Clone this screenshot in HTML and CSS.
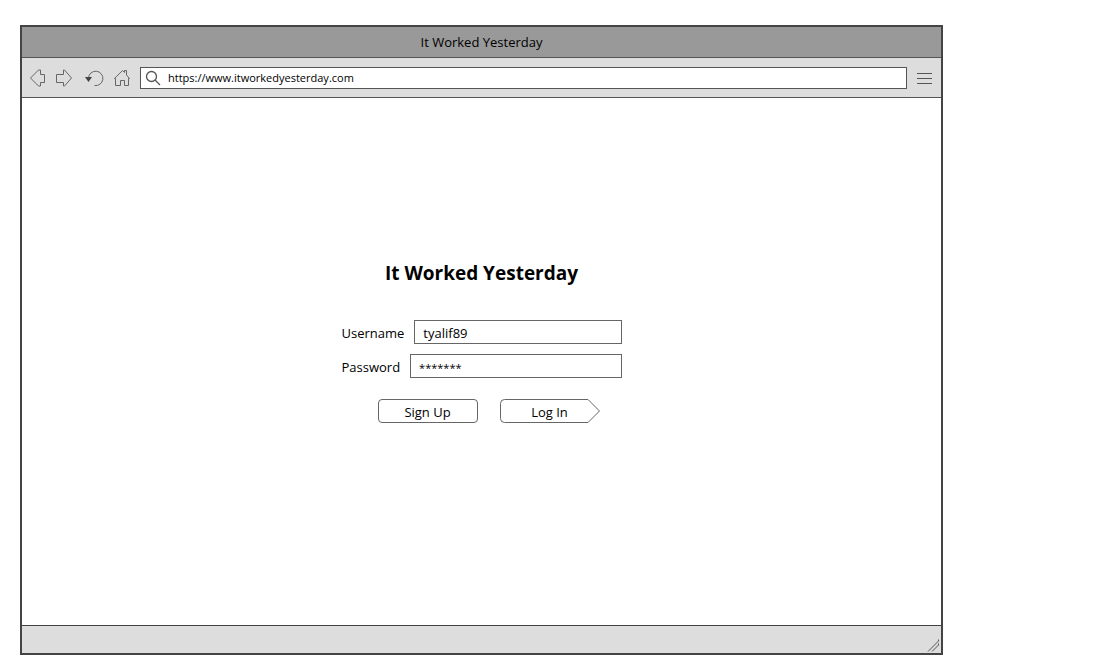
FILE: index.html
```html
<!DOCTYPE html>
<html lang="en">
<head>
<meta charset="utf-8">
<title>It Worked Yesterday</title>
<link rel="stylesheet" href="styles.css">
</head>
<body>
<div class="window">
  <header class="titlebar">It Worked Yesterday</header>
  <nav class="toolbar">
    <button class="tool" type="button" aria-label="Back">
      <svg width="16" height="18" viewBox="0 0 16 18"><path d="M.5 9 8.500 1H10.500V5.500H14.500V13.500H10.500V17H8.500Z"/></svg>
    </button>
    <button class="tool" type="button" aria-label="Forward">
      <svg width="16" height="18" viewBox="0 0 16 18"><path d="M15.500 9 8.500 1H7.500V5.500H.5V13.500H7.500V17H8.500Z"/></svg>
    </button>
    <button class="tool" type="button" aria-label="Reload">
      <svg width="22" height="18" viewBox="0 0 22 18"><path d="M6.500 9A7.200 7.200 0 1 1 12.500 16.500"/><path class="solid" d="M3 8H10L6.500 13Z"/></svg>
    </button>
    <button class="tool" type="button" aria-label="Home">
      <svg width="16" height="18" viewBox="0 0 16 18"><path d="M.5 9.500 8.500 1.500 10.500 3.500V1.500H12.500V6L15.500 9.500H14.500V16.500H10.500V11.500H6.500V16.500H1.500V9.500Z"/></svg>
    </button>
    <div class="address">
      <svg class="search" width="16" height="16" viewBox="0 0 16 16"><circle cx="6.500" cy="6.500" r="5"/><path d="M10 10 15 15"/></svg>
      <input class="address-input" type="text" aria-label="Address" value="https://www.itworkedyesterday.com">
    </div>
    <button class="tool" type="button" aria-label="Menu">
      <svg class="menu" width="16" height="18" viewBox="0 0 16 18"><path d="M0 4.500H15M0 9.500H15M0 14.500H15"/></svg>
    </button>
  </nav>
  <main class="page">
    <h1 class="heading">It Worked Yesterday</h1>
    <form class="login">
      <div class="field">
        <label class="field-label" for="username">Username</label>
        <input class="field-input" id="username" type="text" value="tyalif89">
      </div>
      <div class="field">
        <label class="field-label" for="password">Password</label>
        <input class="field-input masked" id="password" type="text" value="*******">
      </div>
      <div class="actions">
        <button class="action rounded" type="button">Sign Up</button>
        <button class="action arrow" type="button">
          <svg class="arrow-shape" width="100" height="24" viewBox="0 0 100 24"><path d="M4.500 .5H88L99.500 12 88 23.500H4.500A4 4 0 0 1 .5 19.500V4.500A4 4 0 0 1 4.500 .5Z"/></svg>
          <span class="arrow-label">Log In</span>
        </button>
      </div>
    </form>
  </main>
  <footer class="statusbar">
    <svg class="grip" width="14" height="14" viewBox="0 0 14 14"><path d="M1 12.500 11.500 2V.5M5 12.500 11.500 6V4.500"/></svg>
  </footer>
</div>
</body>
</html>
```
FILE: styles.css
```css
* {
  box-sizing: border-box;
}

body {
  margin: 0;
  padding: 25px 157px 0 20px;
  background: #fff;
  color: #000;
  font: 13px/20px "Open Sans", "Noto Sans", sans-serif;
}

button,
input {
  margin: 0;
  padding: 0;
  border: 0;
  background: none;
  color: inherit;
  font: inherit;
}

svg {
  display: block;
  flex: none;
  fill: none;
  stroke: #666;
}

.window {
  display: flex;
  flex-direction: column;
  min-height: calc(100vh - 25px);
  border: 2px solid #444;
}

.titlebar {
  padding: 5px;
  border-bottom: 1px solid #555;
  background: #999;
  text-align: center;
}

.toolbar {
  display: flex;
  align-items: center;
  gap: 10px;
  padding: 9px 8px 8px;
  border-bottom: 1px solid #555;
  background: #ddd;
}

.solid {
  fill: #444;
  stroke: none;
}

.search,
.menu,
.grip {
  stroke: #555;
}

.search {
  stroke-width: 1.3;
}

.address {
  display: flex;
  flex: 1;
  align-items: center;
  gap: 7px;
  height: 22px;
  padding: 0 4px;
  border: 1px solid #555;
  background: #fff;
}

.address-input {
  flex: 1;
  min-width: 0;
  height: 18px;
  font-size: 11px;
}

.page {
  display: flex;
  flex: 1;
  flex-direction: column;
  align-items: center;
  padding: 161px 20px 40px;
}

.heading {
  margin: 0 0 33px;
  font-size: 19px;
  line-height: 28px;
}

.login {
  display: flex;
  flex-direction: column;
  gap: 10px;
  width: 280px;
}

.field {
  display: flex;
  align-items: center;
  gap: 10px;
}

.field-label {
  padding-top: 2px;
}

.field-input {
  flex: 1;
  min-width: 0;
  height: 24px;
  padding: 2px 8px 0;
  border: 1px solid #666;
}

.masked {
  font-size: 11px;
}

.actions {
  display: flex;
  gap: 22px;
  padding: 11px 0 0 36px;
}

.action {
  width: 100px;
  height: 24px;
  padding-top: 2px;
}

.rounded {
  border: 1px solid #666;
  border-radius: 4px;
}

.arrow {
  position: relative;
}

.arrow-shape {
  position: absolute;
  inset: 0;
}

.arrow-label {
  position: relative;
}

.statusbar {
  display: flex;
  align-items: flex-end;
  justify-content: flex-end;
  height: 28px;
  border-top: 1px solid #444;
  background: #ddd;
}
```
